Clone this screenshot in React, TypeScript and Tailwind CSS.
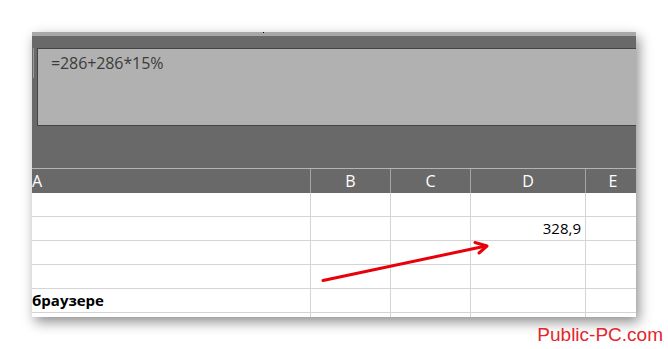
import React from "react";

const cols = [
  { key: "A", w: "w-[279px]", align: "justify-start" },
  { key: "B", w: "w-[80px]", align: "justify-center" },
  { key: "C", w: "w-[80px]", align: "justify-center" },
  { key: "D", w: "w-[115px]", align: "justify-center" },
  { key: "E", w: "flex-1", align: "justify-center" },
];

function Row({ children, bold }: { children?: React.ReactNode; bold?: boolean }) {
  return (
    <div className="flex h-[24px] border-b border-[#d4d4d4] bg-white">
      <div className={`w-[279px] border-r border-[#d4d4d4] flex items-center text-black text-[15px] ${bold ? "font-bold" : ""}`}>
        {bold ? children : null}
      </div>
      <div className="w-[80px] border-r border-[#d4d4d4]" />
      <div className="w-[80px] border-r border-[#d4d4d4]" />
      <div className="w-[115px] border-r border-[#d4d4d4] flex items-center justify-end pr-[4px] text-[15px] text-black">
        {!bold ? children : null}
      </div>
      <div className="flex-1" />
    </div>
  );
}

export default function App() {
  return (
    <div
      className="relative w-[668px] h-[349px] bg-white overflow-hidden"
      style={{ fontFamily: "'Open Sans', 'Noto Sans', sans-serif" }}
    >
      <div className="ml-[32px] pt-[32px]">
        <div className="relative w-[604px] h-[285px] overflow-hidden shadow-[3px_5px_12px_rgba(0,0,0,0.45)]">
          <div className="h-[4px] bg-[#a7a7a7]" />
          <div className="relative h-[132px] bg-[#696969] pt-[12px] pl-[5px]">
            <div className="absolute left-[1px] top-[12px] h-[30px] w-[1px] bg-[#9a9a9a]" />
            <div className="h-[78px] border-y border-l border-[#444444] bg-[#b1b1b1] pl-[13px] pt-[2px] text-[16px] text-[#3c3c3c] tracking-[-0.1px]">
              =286+286*15%
            </div>
            <div className="absolute left-[231px] top-[-4px] h-[1px] w-[1px] bg-black" />
          </div>
          <div className="flex h-[25px] border-t border-[#b4b4b4] bg-[#696969] text-[16px] text-white">
            {cols.map((c, i) => (
              <div
                key={c.key}
                className={`${c.w} flex items-center ${c.align} ${i < 4 ? "border-r border-[#a5a5a5]" : ""} ${c.key === "E" ? "pl-[4px]" : ""}`}
              >
                {c.key}
              </div>
            ))}
          </div>
          <Row />
          <Row>328,9</Row>
          <Row />
          <Row />
          <Row bold>браузере</Row>
          <Row />
          <svg className="absolute left-0 top-0" width="604" height="285" viewBox="32 32 604 285">
            <g stroke="#e8000b" strokeWidth="3" fill="none" strokeLinecap="round" strokeLinejoin="round">
              <line x1="323" y1="280.5" x2="486" y2="246" />
              <polyline points="475,242.5 487,246 479,253" />
            </g>
          </svg>
        </div>
      </div>
      <div
        className="absolute right-[5px] top-[324px] text-[19px] leading-[22px] text-[#e3262d]"
        style={{ fontFamily: "'Liberation Sans', Arial, sans-serif" }}
      >
        Public-PC.com
      </div>
    </div>
  );
}
